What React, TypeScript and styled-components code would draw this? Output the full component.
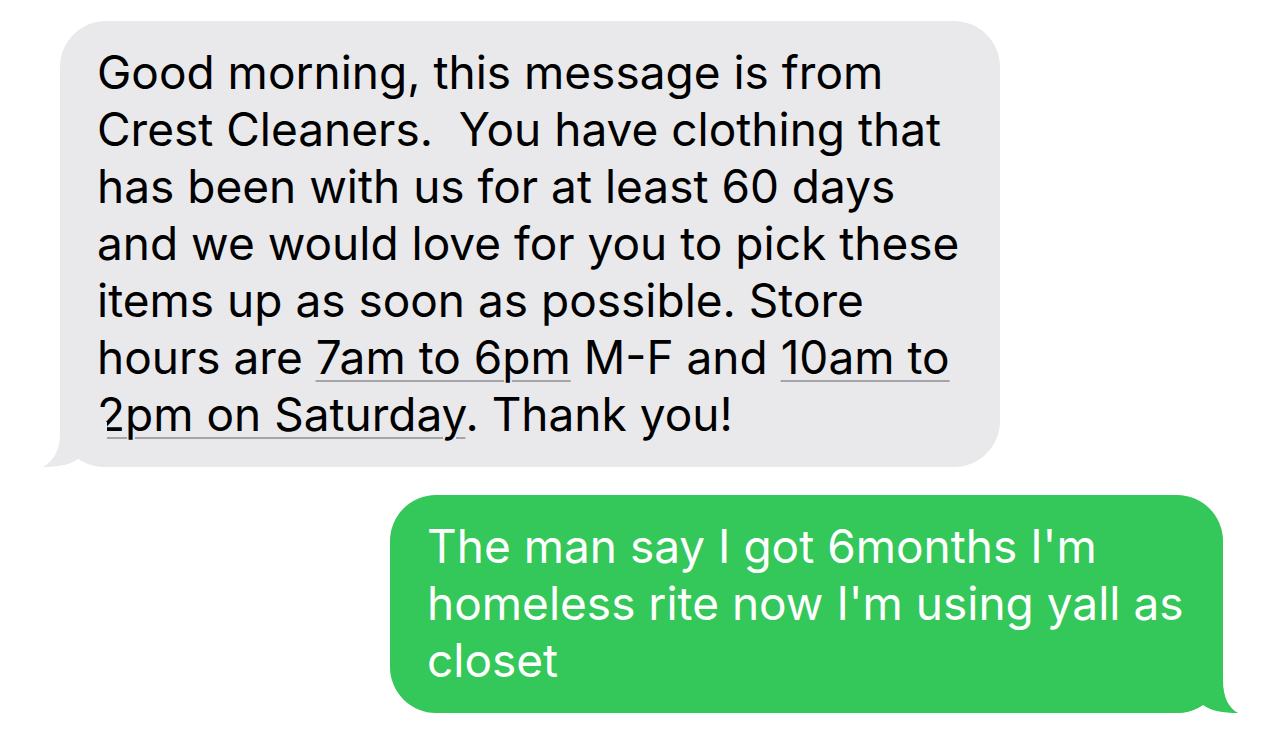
import styled, { createGlobalStyle } from 'styled-components';

const GlobalStyle = createGlobalStyle`
    html, body {
        margin: 0;
        padding: 0;
        background: #ffffff;
    }
`;

const Thread = styled.div`
    display: flex;
    flex-direction: column;
    gap: 28px;
    padding: 21px 61px 0 60px;
    font-family: Inter, 'Noto Sans', sans-serif;
    font-size: 46px;
    line-height: 57px;
`;

const Bubble = styled.div<{ $sent?: boolean; $width: number }>`
    position: relative;
    box-sizing: border-box;
    width: ${(p) => p.$width}px;
    padding: 23px 37px 24px;
    border-radius: 46px;
    background: ${(p) => (p.$sent ? '#34c759' : '#e9e9eb')};
    color: ${(p) => (p.$sent ? '#ffffff' : '#000000')};
    align-self: ${(p) => (p.$sent ? 'flex-end' : 'flex-start')};
`;

const Line = styled.span`
    display: block;
    white-space: nowrap;
`;

const Detected = styled.span`
    text-decoration: underline;
    text-decoration-color: #a4a4a8;
    text-decoration-thickness: 2px;
    text-underline-offset: 6px;
    text-decoration-skip-ink: auto;
`;

const Tail = styled.svg<{ $sent?: boolean }>`
    position: absolute;
    bottom: 0;
    width: 65px;
    height: 45px;
    ${(p) => (p.$sent ? 'right: -16px;' : 'left: -18px;')}
`;

const App = () => {
    return (
        <>
            <GlobalStyle />
            <Thread>
                <Bubble $width={940}>
                    <Line>Good morning, this message is from</Line>
                    <Line>Crest Cleaners.&nbsp; You have clothing that</Line>
                    <Line>has been with us for at least 60 days</Line>
                    <Line>and we would love for you to pick these</Line>
                    <Line>items up as soon as possible. Store</Line>
                    <Line>
                        hours are <Detected>7am to 6pm</Detected> M-F and <Detected>10am to</Detected>
                    </Line>
                    <Line>
                        <Detected>2pm on Saturday</Detected>. Thank you!
                    </Line>
                    <Tail viewBox={'0 0 65 45'}>
                        <path d={'M18 0 L65 0 L65 45 C52 45 44 42 36 37 C28 43 16 45 1 45 C10 40 18 30 18 12 Z'} fill={'#e9e9eb'} />
                    </Tail>
                </Bubble>
                <Bubble $sent $width={833}>
                    <Line>The man say I got 6months I'm</Line>
                    <Line>homeless rite now I'm using yall as</Line>
                    <Line>closet</Line>
                    <Tail $sent viewBox={'0 0 65 45'}>
                        <path d={'M49 0 L0 0 L0 45 C13 45 21 42 29 37 C37 43 49 45 64 45 C55 40 49 30 49 12 Z'} fill={'#34c759'} />
                    </Tail>
                </Bubble>
            </Thread>
        </>
    );
};

export default App;
